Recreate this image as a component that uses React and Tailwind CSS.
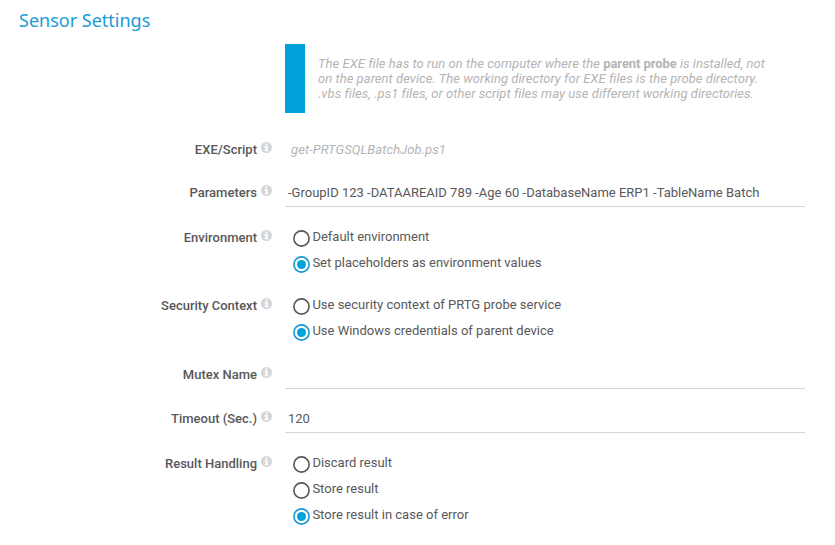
function InfoIcon() {
  return (
    <svg className="ml-1 h-[11px] w-[11px] shrink-0" viewBox="0 0 11 11" aria-hidden="true">
      <circle cx="5.5" cy="5.5" r="5.5" fill="#d3d5d6" />
      <path d="M4.5 1.6h2v1.6h-2zM3.6 4.1h3v3.8h.9v1.4H3.6V7.9h.9V5.5h-.9z" fill="#fff" />
    </svg>
  );
}

function Row({ label, height, children }) {
  return (
    <div className={`flex items-start ${height}`}>
      <div className="flex w-[272px] shrink-0 items-start justify-end">
        <span className="font-medium leading-4">{label}</span>
        <InfoIcon />
      </div>
      <div className="ml-[13px] w-[520px]">{children}</div>
    </div>
  );
}

function TextField({ value }) {
  return <div className="h-[22px] border-b border-[#d3d5d6] pl-[3px] leading-4">{value}</div>;
}

function RadioGroup({ options, selected }) {
  return (
    <div role="radiogroup" className="pl-2">
      {options.map((option) => (
        <div key={option} role="radio" aria-checked={option === selected} className="flex h-[26px] items-start">
          <svg className="h-[17px] w-[17px] shrink-0" viewBox="0 0 17 17" aria-hidden="true">
            <circle
              cx="8.5"
              cy="8.5"
              r="7.6"
              fill="none"
              strokeWidth="1.6"
              stroke={option === selected ? "#179bd7" : "#58585a"}
            />
            {option === selected && <circle cx="8.5" cy="8.5" r="4.5" fill="#00a2dc" />}
          </svg>
          <span className="-mt-px ml-[2.4px] leading-4">{option}</span>
        </div>
      ))}
    </div>
  );
}

export default function App() {
  return (
    <main className="h-[545px] w-[835px] overflow-hidden bg-white font-['Roboto',sans-serif] text-[13px] text-[#58585a]">
      <h1 className="h-11 pt-2 pl-[19px] font-['Noto_Sans',sans-serif] text-[18px] leading-6 text-[#179bd7]">
        Sensor Settings
      </h1>
      <div className="mb-[29px] ml-[285px] flex h-[69px] items-center border-l-[20px] border-[#00a2dc] pl-[13px] leading-[15px] tracking-[0.045px] text-[#b4b4b4] italic">
        <p>
          The EXE file has to run on the computer where the{" "}
          <b className="font-bold tracking-[-0.08px] not-italic">parent probe</b> is installed, not
          <br />
          on the parent device. The working directory for EXE files is the probe directory.
          <br />
          .vbs files, .ps1 files, or other script files may use different working directories.
        </p>
      </div>
      <Row label="EXE/Script" height="h-[43px]">
        <div className="pl-1.5 leading-4 tracking-[0.08px] text-[#b4b4b4] italic">get-PRTGSQLBatchJob.ps1</div>
      </Row>
      <Row label="Parameters" height="h-[45px]">
        <TextField value="-GroupID 123 -DATAAREAID 789 -Age 60 -DatabaseName ERP1 -TableName Batch" />
      </Row>
      <Row label="Environment" height="h-[68px]">
        <RadioGroup
          options={["Default environment", "Set placeholders as environment values"]}
          selected="Set placeholders as environment values"
        />
      </Row>
      <Row label="Security Context" height="h-[69px]">
        <RadioGroup
          options={["Use security context of PRTG probe service", "Use Windows credentials of parent device"]}
          selected="Use Windows credentials of parent device"
        />
      </Row>
      <Row label="Mutex Name" height="h-[44px]">
        <TextField value="" />
      </Row>
      <Row label="Timeout (Sec.)" height="h-[45px]">
        <TextField value="120" />
      </Row>
      <Row label="Result Handling" height="h-[78px]">
        <RadioGroup
          options={["Discard result", "Store result", "Store result in case of error"]}
          selected="Store result in case of error"
        />
      </Row>
    </main>
  );
}
